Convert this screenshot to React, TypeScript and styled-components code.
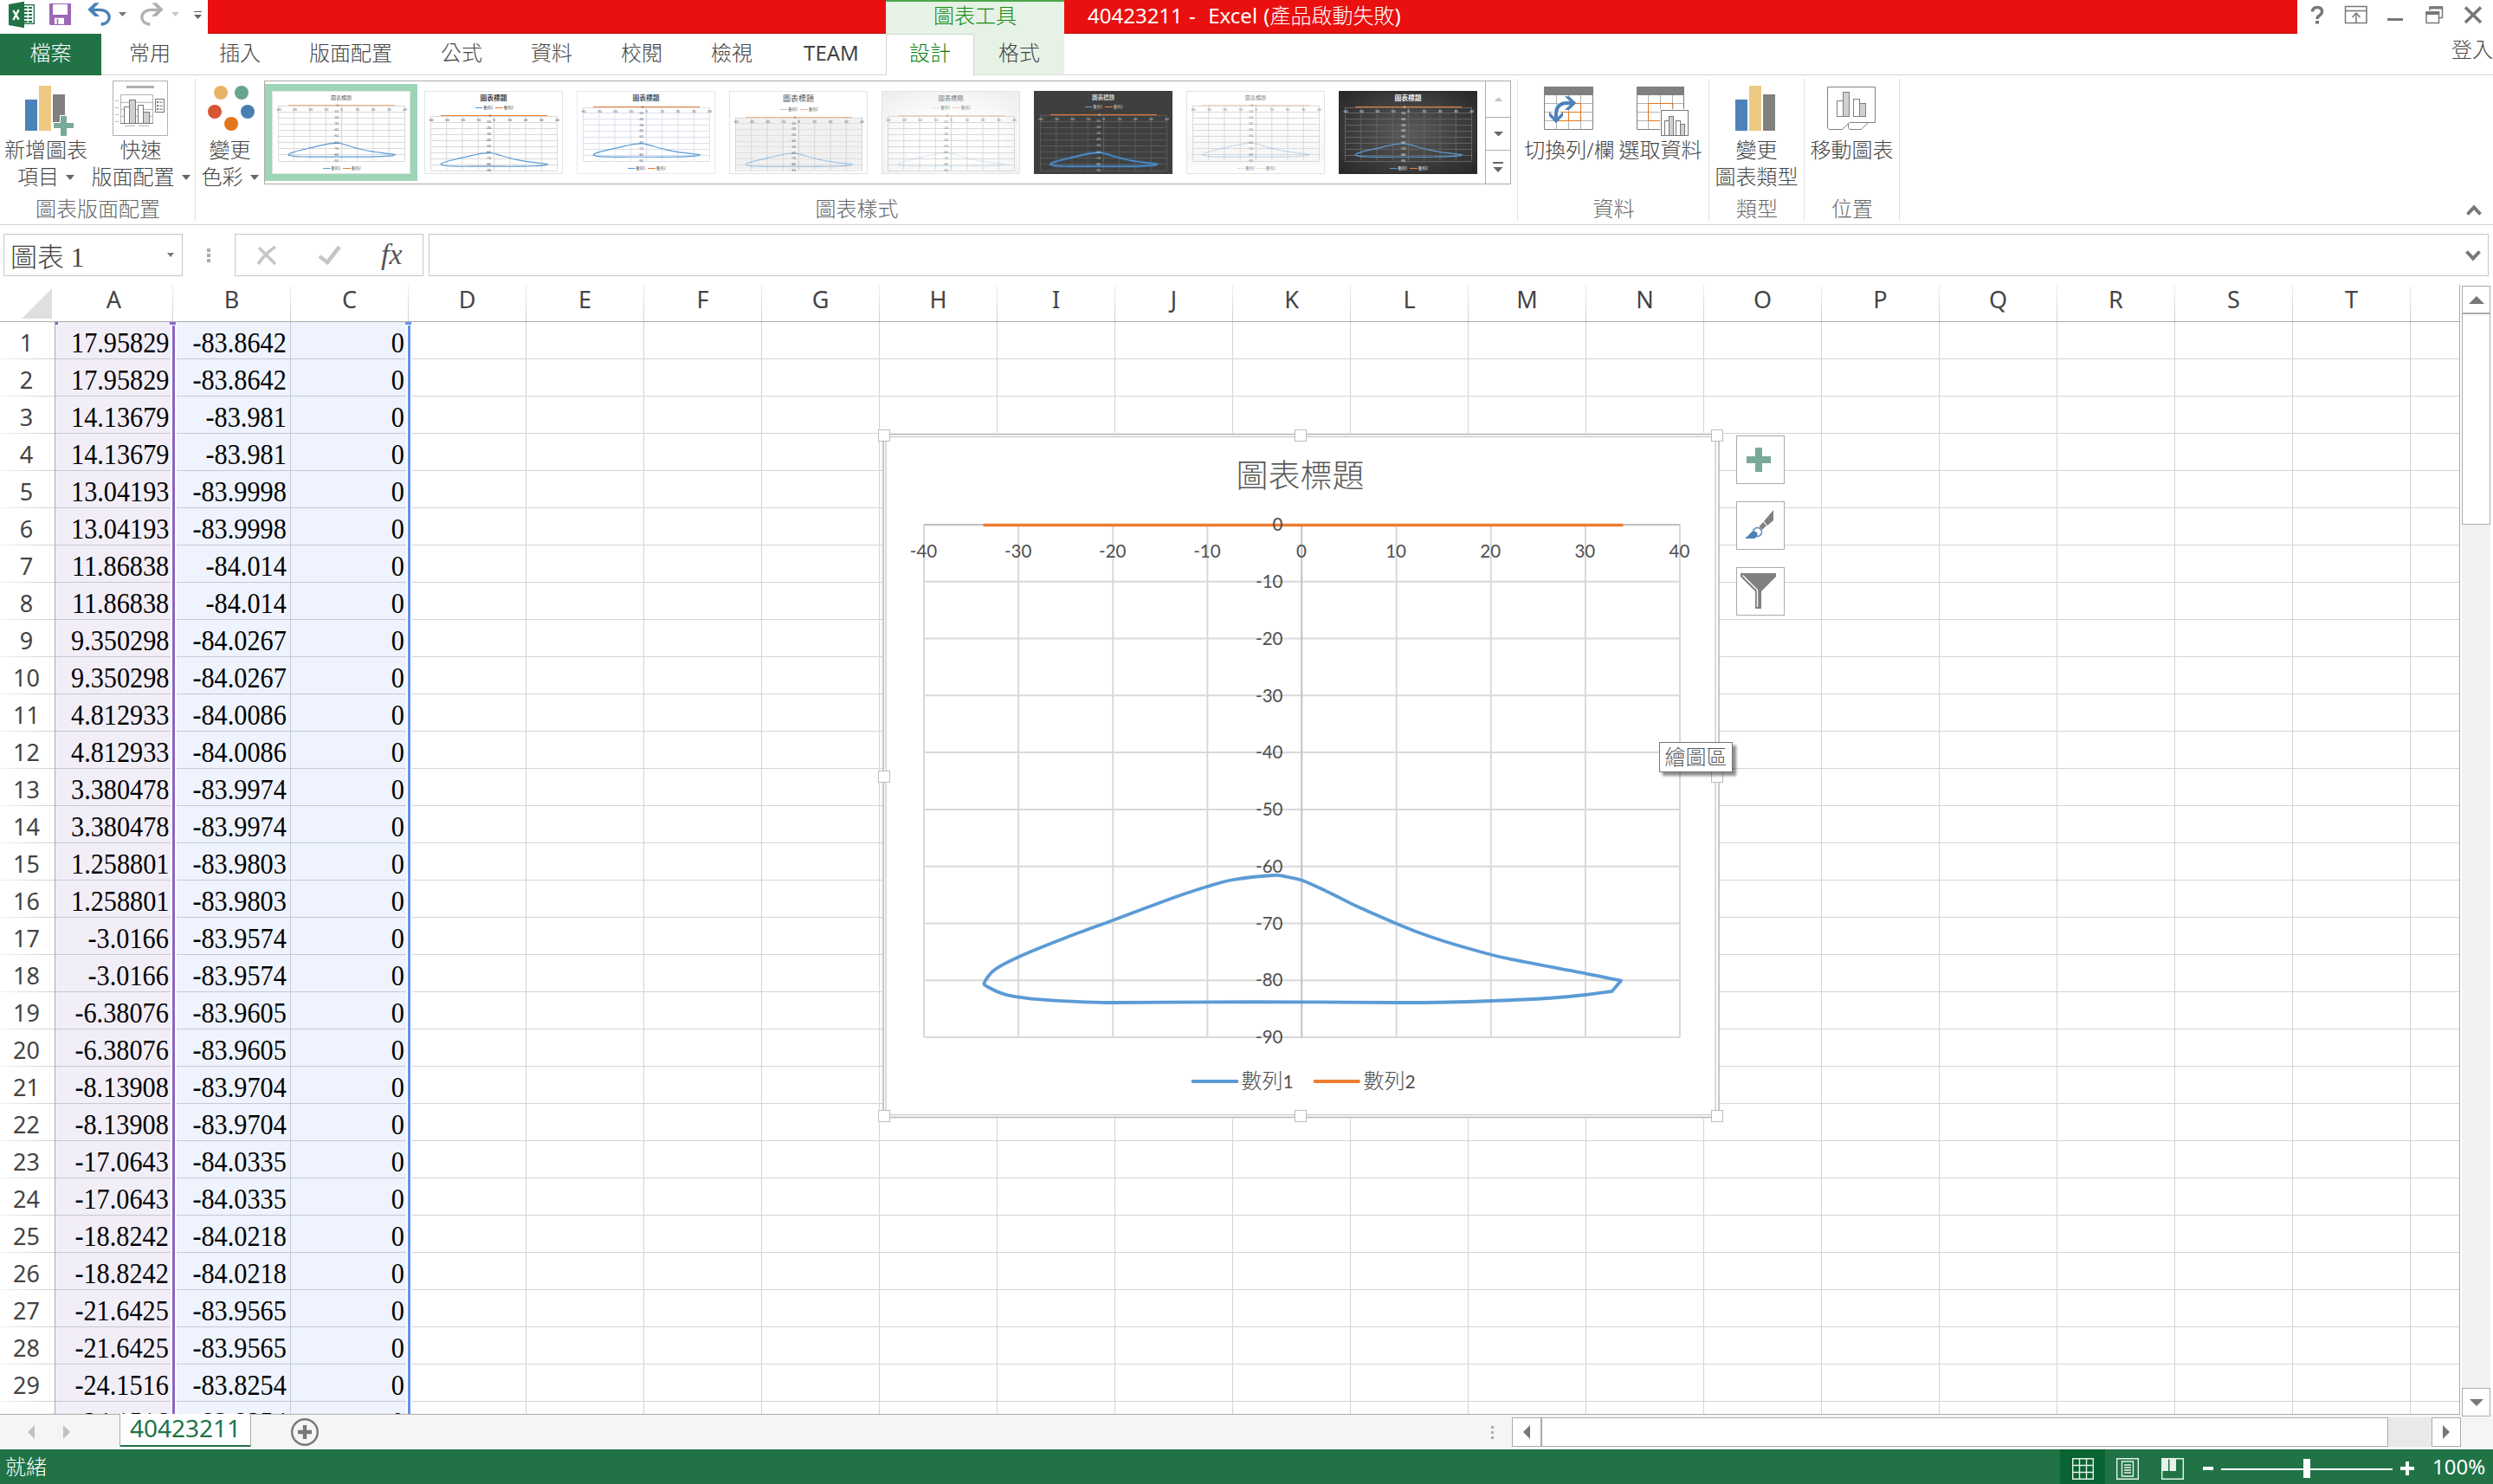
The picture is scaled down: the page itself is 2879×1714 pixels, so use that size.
import React from "react";
import styled, { createGlobalStyle, css } from "styled-components";

const UI = `"Noto Sans", "Noto Sans CJK TC", sans-serif`;
const CJK = `"Noto Sans CJK TC", "Noto Sans", sans-serif`;
const SERIF = `"Liberation Serif", "Noto Sans CJK TC", serif`;

const GlobalStyle = createGlobalStyle`
  * { box-sizing: border-box; }
  body { margin: 0; background: #fff; overflow: hidden; }
  svg { display: block; flex: none; }
`;

const Window = styled.div`
  width: 2879px;
  height: 1714px;
  display: flex;
  flex-direction: column;
  overflow: hidden;
  background: #fff;
  color: #444;
  font: 400 24px/31px ${UI};
`;

/* ---------- title bar ---------- */

const TitleBar = styled.div`
  height: 39px;
  flex: none;
  display: flex;
`;
const QuickAccess = styled.div`
  width: 240px;
`;
const RedStrip = styled.div<{ $w?: number }>`
  ${(p) => (p.$w ? css`width: ${p.$w}px;` : css`flex: 1;`)}
  background: #e9100f;
  border-bottom: 1px solid #b80c0b;
  color: #fff;
  padding: 2px 0 0 27px;
  line-height: 32px;
  white-space: pre;
  word-spacing: 1px;
`;
const Thin = styled.span`
  font-weight: 300;
`;
const ContextHeader = styled.div`
  width: 206px;
  background: #e6f2e6;
  border-top: 2px solid #4aa54a;
  color: #118a11;
  text-align: center;
  font-weight: 300;
  line-height: 31px;
`;
const WindowControls = styled.div`
  width: 226px;
`;

/* ---------- ribbon tabs ---------- */

const Tabs = styled.div`
  height: 48px;
  flex: none;
  display: flex;
  background: linear-gradient(#d4d4d4, #d4d4d4) bottom / 100% 1px no-repeat;
  font-weight: 300;
`;
const Tab = styled.div<{ $w: number; $kind?: "file" | "active" | "context" | "latin" }>`
  width: ${(p) => p.$w}px;
  text-align: center;
  line-height: 44px;
  ${(p) =>
    p.$kind === "file" &&
    css`
      background: #217346;
      color: #fff;
      margin-right: 4px;
    `}
  ${(p) => p.$kind === "latin" && css`font-weight: 400;`}
  ${(p) =>
    p.$kind === "active" &&
    css`
      background: #fff;
      color: #0a7a0a;
      border: 1px solid #d4d4d4;
      border-bottom: 0;
      line-height: 42px;
    `}
  ${(p) =>
    p.$kind === "context" &&
    css`
      background: #e6f2e6;
      border-bottom: 1px solid #d9e5d9;
    `}
`;
const SignIn = styled.div`
  margin-left: auto;
  width: 48px;
  line-height: 36px;
  white-space: nowrap;
`;

/* ---------- ribbon ---------- */

const Ribbon = styled.div`
  height: 173px;
  flex: none;
  display: flex;
  border-bottom: 1px solid #d4d4d4;
`;
const Group = styled.div<{ $w: number }>`
  width: ${(p) => p.$w}px;
  height: 172px;
  display: flex;
  flex-direction: column;
  background: linear-gradient(#e1e1e1, #e1e1e1) right 4px / 1px 164px no-repeat;
`;
const GroupBody = styled.div<{ $pad?: number }>`
  height: 138px;
  display: flex;
  padding-left: ${(p) => p.$pad ?? 0}px;
`;
const GroupLabel = styled.div`
  height: 31px;
  text-align: center;
  color: #666;
  font-weight: 300;
`;
const BigButton = styled.div<{ $w: number }>`
  width: ${(p) => p.$w}px;
  flex: none;
  text-align: center;
  white-space: nowrap;
  font-weight: 300;
  display: flex;
  flex-direction: column;
  align-items: center;
  & > svg { margin-bottom: -1px; }
`;
const Caret = styled.span`
  display: inline-block;
  margin-left: 8px;
  vertical-align: 5px;
  border: 5px solid transparent;
  border-top: 6px solid #666;
  border-bottom: 0;
`;
const Gallery = styled.div`
  width: 1440px;
  height: 120px;
  margin-top: 6px;
  border: 1px solid #ababab;
  display: flex;
`;
const GalleryItem = styled.div<{ $on?: boolean }>`
  width: 176px;
  height: 112px;
  margin-top: 3px;
  padding: 8px;
  flex: none;
  background: ${(p) => (p.$on ? "#9fd5b7" : "transparent")};
`;
const GalleryScroll = styled.div`
  margin-left: auto;
  width: 29px;
  border-left: 1px solid #ababab;
  display: flex;
  flex-direction: column;
`;
const GalleryArrow = styled.div<{ $h: number }>`
  height: ${(p) => p.$h}px;
  display: flex;
  align-items: center;
  justify-content: center;
  & + & { border-top: 1px solid #ababab; }
`;
const RibbonEnd = styled.div`
  margin-left: auto;
  padding: 149px 12px 0 0;
`;

/* ---------- formula bar ---------- */

const FormulaBar = styled.div`
  height: 69px;
  flex: none;
  display: flex;
  padding: 10px 5px 0 4px;
`;
const Field = styled.div<{ $w?: number }>`
  ${(p) => (p.$w ? css`width: ${p.$w}px;` : css`flex: 1; margin-left: 6px;`)}
  height: 49px;
  border: 1px solid #c6c6c6;
  display: flex;
  align-items: center;
`;
const NameText = styled.span`
  flex: 1;
  padding: 7px 0 0 7px;
  font: 300 31px/40px ${SERIF};
`;
const DragDots = styled.div`
  width: 60px;
  height: 49px;
  display: flex;
  flex-direction: column;
  align-items: center;
  justify-content: center;
  gap: 2px;
  & > i { width: 4px; height: 4px; background: #ababab; }
`;
const Fx = styled.span`
  font: italic 34px/40px ${SERIF};
  color: #555;
  margin: -2px 0 0 46px;
`;
const ChevronSlot = styled.div`
  margin-left: auto;
  padding-right: 7px;
`;

/* ---------- worksheet ---------- */

const SheetArea = styled.div`
  height: 1304px;
  flex: none;
  display: flex;
  position: relative;
`;
const Grid = styled.div`
  width: 2841px;
  height: 1304px;
  border-right: 1px solid #ababab;
  background: #fff;
`;
const HeaderRow = styled.div`
  height: 43px;
  display: flex;
  border-bottom: 1px solid #ababab;
`;
const Rows = styled.div`
  height: 1261px;
  overflow: hidden;
`;
const Corner = styled.div`
  width: 64px;
  height: 42px;
  padding: 4px 4px 0 25px;
`;
const ColHead = styled.div`
  width: 136px;
  flex: none;
  text-align: center;
  padding-right: 1px;
  font-size: 27px;
  line-height: 33px;
  background: linear-gradient(#f0f0f0, #cfcfcf) right / 1px 100% no-repeat;
`;
const Row = styled.div`
  height: 43px;
  display: flex;
`;
const RowHead = styled.div`
  width: 64px;
  flex: none;
  text-align: center;
  font-size: 27px;
  line-height: 47px;
  padding-right: 2px;
  border-right: 1px solid #ababab;
  background: linear-gradient(90deg, #f2f2f2, #cfcfcf) left 42px / 100% 1px no-repeat;
`;
const Cell = styled.div<{ $tint?: string }>`
  width: 136px;
  height: 43px;
  flex: none;
  border-right: 1px solid ${(p) => (p.$tint ? "#c5cbdd" : "#d4d4d4")};
  border-bottom: 1px solid ${(p) => (p.$tint ? "#c7c8d6" : "#d4d4d4")};
  background: ${(p) => p.$tint ?? "#fff"};
  color: #000;
  font: 34px/48px ${SERIF};
  text-align: right;
  padding-right: 4px;
  white-space: nowrap;
`;
const Num = styled.span`
  display: inline-block;
  transform: scaleX(0.89);
  transform-origin: right;
`;
const RangeEdge = styled.div<{ $x: number; $c: string }>`
  position: absolute;
  left: ${(p) => p.$x - 2}px;
  top: 43px;
  width: 7px;
  height: 1261px;
  background: ${(p) => p.$c};
  border: solid #fff;
  border-width: 0 2px;
`;
const RangeCap = styled.div<{ $x: number; $w: number; $c: string }>`
  position: absolute;
  left: ${(p) => p.$x}px;
  top: 43px;
  width: ${(p) => p.$w}px;
  height: 4px;
  background: ${(p) => p.$c};
  border-bottom: 1px solid #fff;
`;
const FloatingChart = styled.div`
  position: absolute;
  left: 1014px;
  top: 167px;
`;
const ChartButton = styled.div<{ $y: number }>`
  position: absolute;
  left: 2005px;
  top: ${(p) => p.$y}px;
  width: 56px;
  height: 56px;
  border: 1px solid #ababab;
  background: #fff;
`;
const Tooltip = styled.div`
  position: absolute;
  left: 1916px;
  top: 528px;
  width: 85px;
  height: 35px;
  border: 1px solid #767676;
  background: #fff;
  box-shadow: 4px 4px 3px rgba(0, 0, 0, 0.45);
  color: #575757;
  font-weight: 300;
  text-align: center;
  line-height: 31px;
`;
const VScroll = styled.div`
  margin: 1px 0 0 2px;
  width: 33px;
  height: 1306px;
  background: #f2f2f2;
  display: flex;
  flex-direction: column;
  justify-content: space-between;
`;
const ScrollBox = styled.div<{ $w: number; $h: number }>`
  width: ${(p) => p.$w}px;
  height: ${(p) => p.$h}px;
  border: 1px solid #ababab;
  background: #fff;
  display: flex;
  align-items: center;
  justify-content: center;
`;

/* ---------- bottom bars ---------- */

const SheetBar = styled.div`
  height: 41px;
  flex: none;
  display: flex;
  background: linear-gradient(#ababab, #ababab) left top / 2841px 1px no-repeat #f5f5f5;
`;
const SheetTab = styled.div`
  width: 152px;
  height: 38px;
  margin-left: 56px;
  background: #fff;
  border: solid #ababab;
  border-width: 0 1px;
  box-shadow: inset 0 -2px #217346;
  color: #217346;
  font-size: 28px;
  line-height: 33px;
  text-align: center;
`;
const BarSpace = styled.div`
  flex: 1;
`;
const HScroll = styled.div`
  width: 1096px;
  height: 34px;
  margin: 4px 37px 0 14px;
  display: flex;
  justify-content: space-between;
  background: #e9e9e9;
`;
const StatusBar = styled.div`
  height: 40px;
  flex: none;
  display: flex;
  background: #217346;
  color: #fff;
  line-height: 40px;
`;
const StatusText = styled.span`
  padding-left: 6px;
  font-weight: 300;
`;
const ViewButton = styled.div<{ $on?: boolean }>`
  width: 52px;
  height: 40px;
  display: flex;
  align-items: center;
  justify-content: center;
  padding-top: 4px;
  background: ${(p) => (p.$on ? "#0a6332" : "transparent")};
`;
const ZoomText = styled.span`
  width: 70px;
  white-space: nowrap;
`;

/* ---------- chart geometry ---------- */

const PX = 1067, PW = 873, PY = 606, PH = 592;
const toX = (v: number) => PX + ((v + 40) * PW) / 80;
const toY = (v: number) => PY + (-v * PH) / 90;

const outline: [number, number][] = [
  [1861.5, 1145], [1831, 1149], [1779, 1153.5], [1723, 1156], [1673, 1157.5], [1612, 1158],
  [1503, 1157.3], [1394, 1157.3], [1285, 1158], [1231, 1156.3], [1189, 1153.3], [1161, 1148.7],
  [1141, 1140], [1136.8, 1135], [1148.7, 1120], [1179, 1104], [1231.5, 1082.7], [1285, 1063],
  [1354, 1037.3], [1394, 1024], [1424.4, 1016], [1470, 1011], [1484, 1012.3], [1505, 1017.3],
  [1536.6, 1031.7], [1568, 1047.3], [1612.4, 1066.7], [1634, 1075.5], [1666.5, 1086.7],
  [1708.5, 1099], [1743.6, 1107.7], [1831, 1124.3], [1872, 1132.7],
];

const smooth = (pts: [number, number][]) => {
  let d = `M${pts[0][0]} ${pts[0][1]}`;
  for (let i = 0; i < pts.length - 1; i++) {
    const a = pts[Math.max(i - 1, 0)], b = pts[i], c = pts[i + 1];
    const e = pts[Math.min(i + 2, pts.length - 1)];
    d += `C${b[0] + (c[0] - a[0]) / 7} ${b[1] + (c[1] - a[1]) / 7} ${c[0] - (e[0] - b[0]) / 7} ${c[1] - (e[1] - b[1]) / 7} ${c[0]} ${c[1]}`;
  }
  return d + "Z";
};
const seriesPath = smooth(outline);
const ticksX = [-40, -30, -20, -10, 0, 10, 20, 30, 40];
const ticksY = [0, -10, -20, -30, -40, -50, -60, -70, -80, -90];
const handles = [
  [1014, 496], [1495, 496], [1976, 496], [1014, 890], [1976, 890],
  [1014, 1282], [1495, 1282], [1976, 1282],
];

function Chart() {
  return (
    <svg width="976" height="802" viewBox="1014 496 976 802">
      <rect x="1019" y="500" width="966" height="792" fill="#fff" />
      <rect x="1020" y="501.5" width="965" height="789" fill="none" stroke="#b5b5b5" strokeWidth="1.5" />
      <rect x="1023" y="504.5" width="958" height="783" fill="none" stroke="#d0d0d0" strokeWidth="1.5" />
      <g stroke="#d9d9d9" strokeWidth="2">
        {ticksX.map((t) => <line key={t} x1={toX(t)} x2={toX(t)} y1={PY} y2={PY + PH} />)}
        {ticksY.map((t) => <line key={t} y1={toY(t)} y2={toY(t)} x1={PX} x2={PX + PW} />)}
      </g>
      <path d={`M${PX} ${PY}H${PX + PW}`} stroke="#bfbfbf" strokeWidth="2" />
      <path d="M1503 606V1198" stroke="#bfbfbf" strokeWidth="1.4" />
      <path d="M1137 606.5H1873" stroke="#ed7d31" strokeWidth="3.6" strokeLinecap="round" />
      <path d={seriesPath} fill="none" stroke="#5b9bd5" strokeWidth="3.8" strokeLinejoin="round" />
      <g fontFamily="Lato, sans-serif" fontSize="20.5" fill="#4f4f4f">
        {ticksX.map((t) => <text key={t} x={toX(t) - 0.5} y="644" textAnchor="middle">{t}</text>)}
        {ticksY.map((t) => <text key={t} x="1481.5" y={toY(t) + 7.2} textAnchor="end">{t}</text>)}
      </g>
      <text x="1501.5" y="562.5" textAnchor="middle" fontFamily={CJK} fontWeight="300" fontSize="37" fill="#595959">圖表標題</text>
      <g strokeWidth="3.8" strokeLinecap="round">
        <path d="M1377.5 1249H1428.5" stroke="#5b9bd5" />
        <path d="M1518.5 1249H1569" stroke="#ed7d31" />
      </g>
      <g fontSize="24" fontWeight="300" fontFamily={CJK} fill="#505050">
        <text x="1433.5" y="1257">數列<tspan fontFamily="Lato" fontWeight="400" fontSize="21">1</tspan></text>
        <text x="1574.5" y="1257">數列<tspan fontFamily="Lato" fontWeight="400" fontSize="21">2</tspan></text>
      </g>
      {handles.map(([x, y]) => (
        <rect key={`${x}-${y}`} x={x + 0.5} y={y + 0.5} width="13" height="13" fill="#fff" stroke="#bdbdbd" />
      ))}
    </svg>
  );
}

type Style = {
  id: string; title: number; legend: number; top: number; bottom: number; bold?: boolean;
  size?: number; fade?: number; orangeFade?: number; dotted?: boolean;
  bg: string; grid: string; ink: string; frame: string; glow?: boolean; band?: boolean;
};
const styles: Style[] = [
  { id: "a", title: 7, legend: 89.5, top: 16.5, bottom: 80.5, bg: "#fff", grid: "#d9d9d9", ink: "#595959", frame: "#e3e3e3", orangeFade: 0.6 },
  { id: "b", title: 8, legend: 19.5, top: 28.5, bottom: 91.5, bold: true, bg: "#fff", grid: "#d9d9d9", ink: "#404040", frame: "#e3e3e3" },
  { id: "c", title: 8, legend: 89.5, top: 18.5, bottom: 80.5, bold: true, bg: "#fff", grid: "#dbe0ea", ink: "#44546a", frame: "#e9e9f0" },
  { id: "d", title: 9, legend: 21.5, top: 30.5, bottom: 91.5, size: 9, bg: "#fff", grid: "#d6d6d6", ink: "#595959", frame: "#e3e3e3", fade: 0.5, orangeFade: 0.55, band: true },
  { id: "e", title: 8, legend: 19.5, top: 28.5, bottom: 91.5, size: 7.3, bg: "url(#soft)", grid: "#d9d9d9", ink: "#7f7f7f", frame: "#e3e3e3", fade: 0.18, orangeFade: 0.35 },
  { id: "f", title: 7, legend: 18.5, top: 27.5, bottom: 91.5, bold: true, size: 6.5, bg: "#3f3f3f", grid: "#5a5a5a", ink: "#d0d0d0", frame: "#3f3f3f", glow: true },
  { id: "g", title: 7.5, legend: 89.5, top: 16.5, bottom: 80.5, bg: "url(#fall)", grid: "#d9d9d9", ink: "#7f7f7f", frame: "#e3e3e3", fade: 0.6, orangeFade: 0.6, dotted: true },
  { id: "h", title: 8, legend: 89.5, top: 18.5, bottom: 80.5, bold: true, bg: "url(#night)", grid: "#636363", ink: "#f0f0f0", frame: "#2b2b2b" },
];

function Thumb({ s }: { s: Style }) {
  const sx = 146 / PW, sy = (s.bottom - s.top) / PH;
  const x = (v: number) => 7.5 + ((v + 40) * 146) / 80;
  const y = (v: number) => s.top + (-v * (s.bottom - s.top)) / 90;
  const dash = s.dotted ? "1 1" : undefined;
  return (
    <svg width="160" height="96" viewBox="0 0 160 96">
      <defs>
        <radialGradient id="soft" cx="0.5" cy="0.6" r="0.7"><stop offset="0.4" stopColor="#fff" /><stop offset="1" stopColor="#efefef" /></radialGradient>
        <linearGradient id="fall" x1="0" x2="0" y1="0" y2="1"><stop offset="0.2" stopColor="#fff" /><stop offset="0.8" stopColor="#f6f6f6" /><stop offset="1" stopColor="#fff" /></linearGradient>
        <radialGradient id="night" cx="0.5" cy="0.5" r="0.65"><stop offset="0" stopColor="#5c5c5c" /><stop offset="1" stopColor="#2a2a2a" /></radialGradient>
      </defs>
      <rect x="0.5" y="0.5" width="159" height="95" fill={s.bg} stroke={s.frame} />
      {s.band && <rect x="7" y={s.top} width="146" height={s.bottom - s.top} fill="#f1f1f1" />}
      <g stroke={s.grid} strokeWidth="1">
        {ticksX.map((t) => <line key={t} x1={x(t)} x2={x(t)} y1={s.top} y2={s.bottom} />)}
        {ticksY.map((t) => <line key={t} y1={Math.round(y(t)) + 0.5} y2={Math.round(y(t)) + 0.5} x1={7} x2={154} strokeDasharray={s.band ? "2 1" : undefined} />)}
      </g>
      <path d={`M80.500 ${s.top}V${s.bottom}`} stroke={s.grid} strokeWidth="1.4" />
      <path d={`M19 ${s.top}H142`} stroke="#ed7d31" strokeWidth="1.1" opacity={s.orangeFade ?? 1} strokeDasharray={dash} />
      <g transform={`translate(${7.5 - PX * sx} ${s.top - PY * sy}) scale(${sx} ${sy})`} fill="none">
        {s.glow && <path d={seriesPath} vectorEffect="non-scaling-stroke" stroke="#2f6aa8" strokeWidth="4" opacity="0.45" />}
        <path d={seriesPath} vectorEffect="non-scaling-stroke" stroke="#5b9bd5" strokeWidth="1.2" opacity={s.fade ?? 1} strokeDasharray={dash} />
      </g>
      <text x="80" y={s.title + 2.8} textAnchor="middle" fontSize={s.size ?? (s.bold ? 7.8 : 6)} fontWeight={s.bold ? 700 : 400} fontFamily={CJK} fill={s.ink}>圖表標題</text>
      <g fontFamily="Lato, sans-serif" fontSize="3.8" fill={s.ink}>
        {ticksX.map((t) => <text key={t} x={x(t)} y={s.top + 6.4} textAnchor="middle">{t}</text>)}
        {ticksY.map((t) => <text key={t} x="77" y={y(t) + 1.4} textAnchor="end">{t}</text>)}
      </g>
      <g strokeWidth="1.1" strokeDasharray={dash}>
        <path d={`M59 ${s.legend}h8.500`} stroke="#5b9bd5" opacity={s.fade ?? 1} />
        <path d={`M82 ${s.legend}h9`} stroke="#ed7d31" opacity={s.orangeFade && s.id !== "a" ? s.orangeFade : 1} />
      </g>
      <g fontFamily={CJK} fontSize="4.2" fill={s.ink}>
        <text x="68.500" y={s.legend + 1.6}>數列1</text>
        <text x="92" y={s.legend + 1.6}>數列2</text>
      </g>
    </svg>
  );
}

/* ---------- icons ---------- */

const Tri = ({ dir, c = "#777", s = 8 }: { dir: "up" | "down" | "left" | "right"; c?: string; s?: number }) => {
  const h = s * 2;
  const box = dir === "up" || dir === "down" ? [h, s] : [s, h];
  const pts = {
    up: `0,${s} ${h},${s} ${s},0`, down: `0,0 ${h},0 ${s},${s}`,
    left: `${s},0 ${s},${h} 0,${s}`, right: `0,0 0,${h} ${s},${s}`,
  }[dir];
  return <svg width={box[0]} height={box[1]}><polygon points={pts} fill={c} /></svg>;
};

const QuickIcons = () => (
  <svg width="240" height="39" viewBox="0 0 720 117">
    <rect x="70" y="17" width="48" height="65" fill="#fff" stroke="#217346" strokeWidth="4" />
    <g fill="#217346">
      {[24, 36, 48, 60, 72].map((y) => (
        <React.Fragment key={y}>
          <rect x="84" y={y} width="11" height="6" />
          <rect x="99" y={y} width="12" height="6" />
        </React.Fragment>
      ))}
      <path d="M30 15L84 5V97L30 87Z" />
    </g>
    <path d="M46 36L65 68M65 34L46 69" stroke="#fff" strokeWidth="7" />
    <path d="M171 12H246V87H175L171 83Z" fill="#9b68b7" />
    <path d="M183 15H234V51H183ZM189 62H222V84H202V66H197V84H189Z" fill="#fff" />
    <path d="M316 34H345C390 34 388 84 350 84" fill="none" stroke="#4a80b8" strokeWidth="10" />
    <path d="M344 10H328L304 33L328 57H345L321 33Z" fill="#4a80b8" />
    <path d="M554 34H525C480 34 482 84 520 84" fill="none" stroke="#b1b1b1" strokeWidth="10" />
    <path d="M526 10H542L566 33L542 57H525L549 33Z" fill="#b1b1b1" />
    <path d="M411 42H438L424.500 57Z" fill="#777" />
    <path d="M594 42H621L607.500 57Z" fill="#c6c6c6" />
    <path d="M672 51H699L685.500 66ZM672 39H699V42H672Z" fill="#666" />
  </svg>
);

const ControlIcons = () => (
  <svg width="226" height="39" viewBox="0 0 226 39" fill="none" stroke="#777">
    <path d="M17.500 13.500Q17.500 8.500 23 8.500Q28.500 8.500 28.500 13.500Q28.500 16 25.500 18Q23 19.500 23 22" strokeWidth="3.4" />
    <rect x="21" y="24" width="4" height="3.500" fill="#777" stroke="none" />
    <path d="M55.500 7.500H80V26.500H55.500ZM55.500 12.500H80M68 26V16M63.500 20L68 15L72.500 20" strokeWidth="1.5" />
    <rect x="104" y="21" width="18" height="3" fill="#777" stroke="none" />
    <path d="M153 12V8H167.500V20.500H163" strokeWidth="1.5" />
    <path d="M152.500 9H168" strokeWidth="3" />
    <path d="M149 14V26.500H163.500V14" strokeWidth="1.5" />
    <path d="M148.200 15H164.200" strokeWidth="4" />
    <path d="M194 8.500L212 26M212 8.500L194 26" strokeWidth="3.6" />
  </svg>
);

const AddElementIcon = () => (
  <svg width="106" height="71" viewBox="0 261 318 213">
    <path d="M87 345H129V453H87Z" fill="#4c82b8" />
    <path d="M135 297H177V453H135Z" fill="#eec982" />
    <path d="M183 327H225V423H183Z" fill="#808080" />
    <path d="M207 399H234V423H258V447H234V474H207V447H183V423H207Z" fill="#fff" />
    <path d="M210 402H231V426H255V444H231V471H210V444H186V426H210Z" fill="#79a998" />
  </svg>
);

const QuickLayoutIcon = () => (
  <svg width="113" height="71" viewBox="318 261 339 213" fill="none" strokeWidth="3">
    <rect x="391.500" y="280.500" width="189" height="189" stroke="#b1b1b1" />
    <path d="M438 301.500H534" stroke="#b1b1b1" strokeWidth="9" />
    <path d="M418.500 328.500H529.500V427M418.500 328.500V427M418 355H530M418 379H530M418 403H530M399 349H411M399 373H411M399 397H411M399 421H411M432 436H468M480 436H516" stroke="#b1b1b1" />
    <g stroke="#777" fill="#fff">
      <rect x="430.500" y="370.500" width="18" height="57" /><rect x="448.500" y="346.500" width="21" height="81" fill="#d0d0d0" />
      <rect x="478.500" y="364.500" width="18" height="63" /><rect x="496.500" y="388.500" width="21" height="39" fill="#d0d0d0" />
      <path d="M417 427.500H531" /><rect x="538.500" y="343.500" width="30" height="45" />
      <path d="M552 354.500H564M552 366.500H564M552 378.500H564" />
    </g>
    <path d="M543 351h6v6h-6zM543 363h6v6h-6zM543 375h6v6h-6z" fill="#777" />
  </svg>
);

const ColorsIcon = () => (
  <svg width="79" height="71" viewBox="678 261 237 213">
    <circle cx="765" cy="321" r="24" fill="#e9b465" />
    <circle cx="837" cy="321" r="24" fill="#69a48f" />
    <circle cx="744" cy="387" r="24" fill="#d65532" />
    <circle cx="858" cy="387" r="24" fill="#4a7db3" />
    <circle cx="801" cy="429" r="24" fill="#e3761c" />
  </svg>
);

const SwitchIcon = () => (
  <svg width="105" height="71" viewBox="0 -9 315 213" fill="none" strokeWidth="3">
    <path d="M112.500 60V178M154.500 60V178M196.500 60V178M70 88.500H238M70 118.500H238M70 148.500H238" stroke="#b1b1b1" />
    <path d="M70.500 58V178.500H238.500V58" stroke="#808080" />
    <path d="M69 30H240V60H69Z" fill="#808080" />
    <path d="M112 148.500H196.500V88.500H160M154.500 148V118.500M130 118.500H196" stroke="#e3761c" />
    <path d="M110 140Q104 90 160 87" stroke="#fff" strokeWidth="22" />
    <path d="M111 144V122Q113 87 150 87H168" stroke="#4c82b8" strokeWidth="12" />
    <path d="M141 64H156L181 87L156 111H141L165 87ZM87 117V132L111 157L135 132V117L111 142Z" fill="#4c82b8" />
  </svg>
);

const SelectDataIcon = () => (
  <svg width="105" height="71" viewBox="315 -9 315 213" fill="none" strokeWidth="3">
    <path d="M430.500 60V178M472.500 60V178M514.500 60V178M392 88.500H553M392 118.500H553M392 148.500H553" stroke="#b1b1b1" />
    <path d="M391.500 58V178.500H553.500V58" stroke="#808080" />
    <path d="M390 30H555V60H390Z" fill="#808080" />
    <path d="M430.500 88.500H515.500V148.500H430.500Z" stroke="#e3761c" />
    <path d="M471 108H573V204H471Z" fill="#fff" />
    <g stroke="#777" fill="#fff">
      <rect x="475.500" y="112.500" width="93" height="87" />
      <rect x="487.500" y="148.500" width="15" height="51" /><rect x="502.500" y="133.500" width="15" height="66" fill="#d0d0d0" />
      <rect x="526.500" y="148.500" width="15" height="51" /><rect x="541.500" y="160.500" width="15" height="39" fill="#d0d0d0" />
    </g>
  </svg>
);

const ChartTypeIcon = () => (
  <svg width="109" height="71" viewBox="642 -9 327 213">
    <path d="M732 75H774V183H732Z" fill="#4c82b8" />
    <path d="M780 27H822V183H780Z" fill="#eec982" />
    <path d="M828 57H870V183H828Z" fill="#808080" />
  </svg>
);

const MoveChartIcon = () => (
  <svg width="109" height="71" viewBox="972 -9 327 213" fill="none" stroke="#808080" strokeWidth="3">
    <path d="M1051.500 174V31.500H1216.500V154.500H1127L1103 178.500H1056L1051.500 174M1123.500 158V172L1128 178.500H1168L1192 155" />
    <g fill="#fff">
      <rect x="1084.500" y="79.500" width="21" height="54" /><rect x="1105.500" y="49.500" width="21" height="84" fill="#d0d0d0" />
      <rect x="1141.500" y="73.500" width="21" height="60" /><rect x="1162.500" y="88.500" width="21" height="45" fill="#d0d0d0" />
    </g>
  </svg>
);

const Chevron = ({ up }: { up?: boolean }) => (
  <svg width="20" height="14" viewBox="0 0 20 14">
    <path d={up ? "M2.500 11.500L10 3.500L17.500 11.500" : "M2.500 2.500L10 10.500L17.500 2.500"} fill="none" stroke="#777" strokeWidth="4" />
  </svg>
);

/* ---------- data ---------- */

const colA = ["17.95829", "14.13679", "13.04193", "11.86838", "9.350298", "4.812933", "3.380478", "1.258801", "-3.0166", "-6.38076", "-8.13908", "-17.0643", "-18.8242", "-21.6425", "-24.1516"];
const colB = ["-83.8642", "-83.981", "-83.9998", "-84.014", "-84.0267", "-84.0086", "-83.9974", "-83.9803", "-83.9574", "-83.9605", "-83.9704", "-84.0335", "-84.0218", "-83.9565", "-83.8254"];
const rowData = Array.from({ length: 30 }, (_, i) => {
  const k = Math.min(i >> 1, 14);
  return [colA[k], colB[k], "0"];
});
const columns = "ABCDEFGHIJKLMNOPQRST".split("");
const tints = ["#f2eef8", "#eef3fe", "#eef3fe"];
/* the last column is cut by the right edge of the sheet */
const LastCell = styled.div`
  flex: 1;
  border-bottom: 1px solid #d4d4d4;
`;

export default function App() {
  return (
    <Window>
      <GlobalStyle />
      <TitleBar>
        <QuickAccess><QuickIcons /></QuickAccess>
        <RedStrip $w={783} />
        <ContextHeader>圖表工具</ContextHeader>
        <RedStrip>{"40423211 -  Excel ("}<Thin>產品啟動失敗</Thin>)</RedStrip>
        <WindowControls><ControlIcons /></WindowControls>
      </TitleBar>

      <Tabs>
        <Tab $w={117} $kind="file">檔案</Tab>
        <Tab $w={104}>常用</Tab>
        <Tab $w={104}>插入</Tab>
        <Tab $w={152}>版面配置</Tab>
        <Tab $w={104}>公式</Tab>
        <Tab $w={104}>資料</Tab>
        <Tab $w={104}>校閱</Tab>
        <Tab $w={104}>檢視</Tab>
        <Tab $w={126} $kind="latin">TEAM</Tab>
        <Tab $w={102} $kind="active">設計</Tab>
        <Tab $w={104} $kind="context">格式</Tab>
        <SignIn>登入</SignIn>
      </Tabs>

      <Ribbon>
        <Group $w={226}>
          <GroupBody>
            <BigButton $w={106}><AddElementIcon /><span>新增圖表</span><span>項目<Caret /></span></BigButton>
            <BigButton $w={113}><QuickLayoutIcon /><span>快速</span><span>版面配置<Caret /></span></BigButton>
          </GroupBody>
          <GroupLabel>圖表版面配置</GroupLabel>
        </Group>
        <Group $w={1527}>
          <GroupBody>
            <BigButton $w={79}><ColorsIcon /><span>變更</span><span>色彩<Caret /></span></BigButton>
            <Gallery>
              {styles.map((s, i) => (
                <GalleryItem key={s.id} $on={i === 0}><Thumb s={s} /></GalleryItem>
              ))}
              <GalleryScroll>
                <GalleryArrow $h={41}><Tri dir="up" c="#c6c6c6" s={5.5} /></GalleryArrow>
                <GalleryArrow $h={38}><Tri dir="down" c="#666" s={5.5} /></GalleryArrow>
                <GalleryArrow $h={39}>
                  <svg width="12" height="12"><path d="M0 0H12V2H0ZM0.500 6H11.500L6 12Z" fill="#666" /></svg>
                </GalleryArrow>
              </GalleryScroll>
            </Gallery>
          </GroupBody>
          <GroupLabel>圖表樣式</GroupLabel>
        </Group>
        <Group $w={221}>
          <GroupBody $pad={7}>
            <BigButton $w={105}><SwitchIcon /><span>切換列/欄</span></BigButton>
            <BigButton $w={105}><SelectDataIcon /><span>選取資料</span></BigButton>
          </GroupBody>
          <GroupLabel>資料</GroupLabel>
        </Group>
        <Group $w={110}>
          <GroupBody>
            <BigButton $w={109}><ChartTypeIcon /><span>變更</span><span>圖表類型</span></BigButton>
          </GroupBody>
          <GroupLabel>類型</GroupLabel>
        </Group>
        <Group $w={110}>
          <GroupBody>
            <BigButton $w={109}><MoveChartIcon /><span>移動圖表</span></BigButton>
          </GroupBody>
          <GroupLabel>位置</GroupLabel>
        </Group>
        <RibbonEnd><Chevron up /></RibbonEnd>
      </Ribbon>

      <FormulaBar>
        <Field $w={207}>
          <NameText>圖表 1</NameText>
          <svg width="20" height="5"><path d="M3 0H11L7 5Z" fill="#777" /></svg>
        </Field>
        <DragDots><i /><i /><i /></DragDots>
        <Field $w={218}>
          <svg width="122" height="24" viewBox="0 0 122 24">
            <path d="M27 3L46 22M46 2Q34 10 26 22" fill="none" stroke="#c6c6c6" strokeWidth="3.4" />
            <path d="M97 13L106 20L120 2" fill="none" stroke="#c6c6c6" strokeWidth="4.6" />
          </svg>
          <Fx>fx</Fx>
        </Field>
        <Field>
          <ChevronSlot><Chevron /></ChevronSlot>
        </Field>
      </FormulaBar>

      <SheetArea>
        <Grid>
          <HeaderRow>
            <Corner><svg width="35" height="35"><path d="M35 0V35H0Z" fill="#dfdfdf" /></svg></Corner>
            {columns.map((c) => <ColHead key={c}>{c}</ColHead>)}
          </HeaderRow>
          <Rows>
            {rowData.map((cells, r) => (
              <Row key={r}>
                <RowHead>{r < 29 ? r + 1 : ""}</RowHead>
                {cells.map((v, c) => <Cell key={c} $tint={tints[c]}><Num>{v}</Num></Cell>)}
                {columns.slice(3).map((c) => <Cell key={c} />)}
                <LastCell />
              </Row>
            ))}
          </Rows>
        </Grid>
        <VScroll>
          <div>
            <ScrollBox $w={33} $h={32}><Tri dir="up" s={9} /></ScrollBox>
            <ScrollBox $w={33} $h={244} />
          </div>
          <ScrollBox $w={33} $h={33}><Tri dir="down" s={8} /></ScrollBox>
        </VScroll>
        <RangeEdge $x={199} $c="#8e63c4" />
        <RangeEdge $x={471} $c="#6491ee" />
        <RangeCap $x={64} $w={3} $c="#8e63c4" />
        <RangeCap $x={196} $w={7} $c="#8e63c4" />
        <RangeCap $x={468} $w={7} $c="#6491ee" />
        <FloatingChart><Chart /></FloatingChart>
        <ChartButton $y={174}>
          <svg width="54" height="54" viewBox="1 1 54 54"><path d="M22 14H30V24H40V32H30V42H22V32H12V24H22Z" fill="#79a998" /></svg>
        </ChartButton>
        <ChartButton $y={250}>
          <svg width="54" height="54" viewBox="1 1 54 54">
            <path d="M43 10V22L36 28L32 23ZM31 24L35 28L30 33L26.500 29Z" fill="#808080" />
            <circle cx="24.500" cy="35.500" r="5" fill="#fff" stroke="#4c82b8" strokeWidth="1.4" />
            <path d="M10 43Q15 39 17 36Q20 33 24 36Q26 41 21 43Z" fill="#4c82b8" />
          </svg>
        </ChartButton>
        <ChartButton $y={326}>
          <svg width="54" height="54" viewBox="1 1 54 54">
            <path d="M5 7H46V11L29 28V48H22V28L5 11Z" fill="#808080" />
            <path d="M7.500 9.500L24.500 26.500V46" fill="none" stroke="#fff" strokeWidth="1.4" />
          </svg>
        </ChartButton>
        <Tooltip>繪圖區</Tooltip>
      </SheetArea>

      <SheetBar>
        <svg width="82" height="40" viewBox="0 0 82 40">
          <path d="M40 13V29L32 21ZM73 13V29L81 21Z" fill="#c1c1c1" />
        </svg>
        <SheetTab>40423211</SheetTab>
        <svg width="124" height="41" viewBox="0 0 124 41">
          <circle cx="62" cy="21" r="14.800" fill="none" stroke="#777" strokeWidth="2.4" />
          <path d="M54 21H70M62 13V29" stroke="#777" strokeWidth="4.400" />
        </svg>
        <BarSpace />
        <svg width="18" height="41" viewBox="0 0 18 41">
          <path d="M8 14h3v3h-3zM8 20h3v3h-3zM8 26h3v3h-3z" fill="#ababab" />
        </svg>
        <HScroll>
          <ScrollBox $w={34} $h={34}><Tri dir="left" s={8} /></ScrollBox>
          <ScrollBox $w={978} $h={34} />
          <BarSpace />
          <ScrollBox $w={34} $h={34}><Tri dir="right" s={8} /></ScrollBox>
        </HScroll>
      </SheetBar>

      <StatusBar>
        <StatusText>就緒</StatusText>
        <BarSpace />
        <ViewButton $on>
          <svg width="25" height="25" fill="none" stroke="#e6f2ea" strokeWidth="1.4"><path d="M.7.7H24.300V24.300H.7ZM8.500 1V24M16.500 1V24M1 8.500H24M1 16.500H24" /></svg>
        </ViewButton>
        <ViewButton>
          <svg width="26" height="25" fill="none" stroke="#e6f2ea" strokeWidth="1.4"><path d="M.7.7H25.300V24.300H.7ZM6.500 4H19.500V21H6.500ZM9 8H17M9 11H17M9 14H17M9 17H17" /></svg>
        </ViewButton>
        <ViewButton>
          <svg width="26" height="25" fill="none"><path d="M.7.7H25.300V24.300H.7Z" stroke="#e6f2ea" strokeWidth="1.400" /><path d="M1 1H8V15H1ZM9.500 1H17V15H9.500Z" fill="#e6f2ea" /></svg>
        </ViewButton>
        <svg width="274" height="40" viewBox="2535 1674 274 40" fill="#fff">
          <path d="M2544 1694H2556V1698H2544ZM2565 1696H2763V1698H2565ZM2660 1685H2668V1707H2660ZM2778 1688H2782V1694H2788V1698H2782V1704H2778V1698H2772V1694H2778Z" />
        </svg>
        <ZoomText>100%</ZoomText>
      </StatusBar>
    </Window>
  );
}
